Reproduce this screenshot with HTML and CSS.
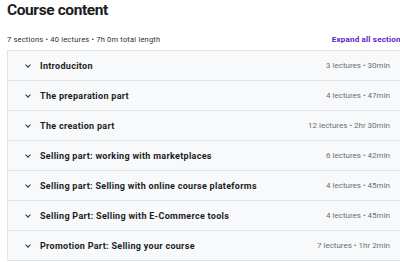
FILE: index.html
```html
<!DOCTYPE html>
<html lang="en">
<head>
    <meta charset="UTF-8">
    <meta name="viewport" content="width=device-width, initial-scale=1.0">
    <title>Course content</title>
    <link rel="stylesheet" href="styles.css">
</head>
<body>
    <div class="course">
        <h2 class="title">Course content</h2>
        <div class="meta">
            <span>7 sections • 40 lectures • 7h 0m total length</span>
            <button class="expand">Expand all sections</button>
        </div>
        <div class="sections">
            <div class="section"><span class="chev"></span><span class="name">Introduciton</span><span class="info">3 lectures • 30min</span></div>
            <div class="section"><span class="chev"></span><span class="name">The preparation part</span><span class="info">4 lectures • 47min</span></div>
            <div class="section"><span class="chev"></span><span class="name">The creation part</span><span class="info">12 lectures • 2hr 30min</span></div>
            <div class="section"><span class="chev"></span><span class="name">Selling part: working with marketplaces</span><span class="info">6 lectures • 42min</span></div>
            <div class="section"><span class="chev"></span><span class="name">Selling part: Selling with online course plateforms</span><span class="info">4 lectures • 45min</span></div>
            <div class="section"><span class="chev"></span><span class="name">Selling Part: Selling with E-Commerce tools</span><span class="info">4 lectures • 45min</span></div>
            <div class="section"><span class="chev"></span><span class="name">Promotion Part: Selling your course</span><span class="info">7 lectures • 1hr 2min</span></div>
        </div>
    </div>
</body>
</html>
```

FILE: styles.css
```css
body {
    margin: 0;
    background-color: #fff;
    font-family: Roboto, "Liberation Sans", sans-serif;
    color: #1c1d1f;
    overflow: hidden;
}
.course {
    width: 395px;
    padding-left: 7px;
}
.title {
    margin: 0;
    padding-top: 1px;
    font-size: 15.5px;
    font-weight: 700;
    line-height: 18px;
    letter-spacing: -0.4px;
}
.meta {
    display: flex;
    justify-content: space-between;
    align-items: center;
    margin-top: 14px;
    height: 12px;
    font-size: 7.5px;
    letter-spacing: 0.2px;
    color: #2d2f31;
}
.expand {
    flex-shrink: 0;
    white-space: nowrap;
    border: none;
    background: none;
    padding: 0;
    margin-right: -3px;
    font-family: inherit;
    font-size: 8px;
    font-weight: 700;
    letter-spacing: 0.2px;
    color: #5624d0;
    cursor: pointer;
}
.sections {
    margin-top: 5px;
    border: 1px solid #e1e5e8;
    border-right: none;
}
.section {
    display: flex;
    align-items: center;
    height: 29px;
    padding: 0 12px 0 18px;
    background-color: #f7f9fa;
    border-bottom: 1px solid #e1e5e8;
    font-size: 9px;
    letter-spacing: 0.3px;
}
.section:last-child {
    border-bottom: none;
}
.chev {
    width: 3px;
    height: 3px;
    border-right: 1px solid #2d2f31;
    border-bottom: 1px solid #2d2f31;
    transform: rotate(45deg);
    margin: -2px 10px 0 0;
}
.name {
    flex: 1;
    font-weight: 700;
}
.info {
    font-size: 8px;
    letter-spacing: 0;
    color: #6a6f73;
}
```
